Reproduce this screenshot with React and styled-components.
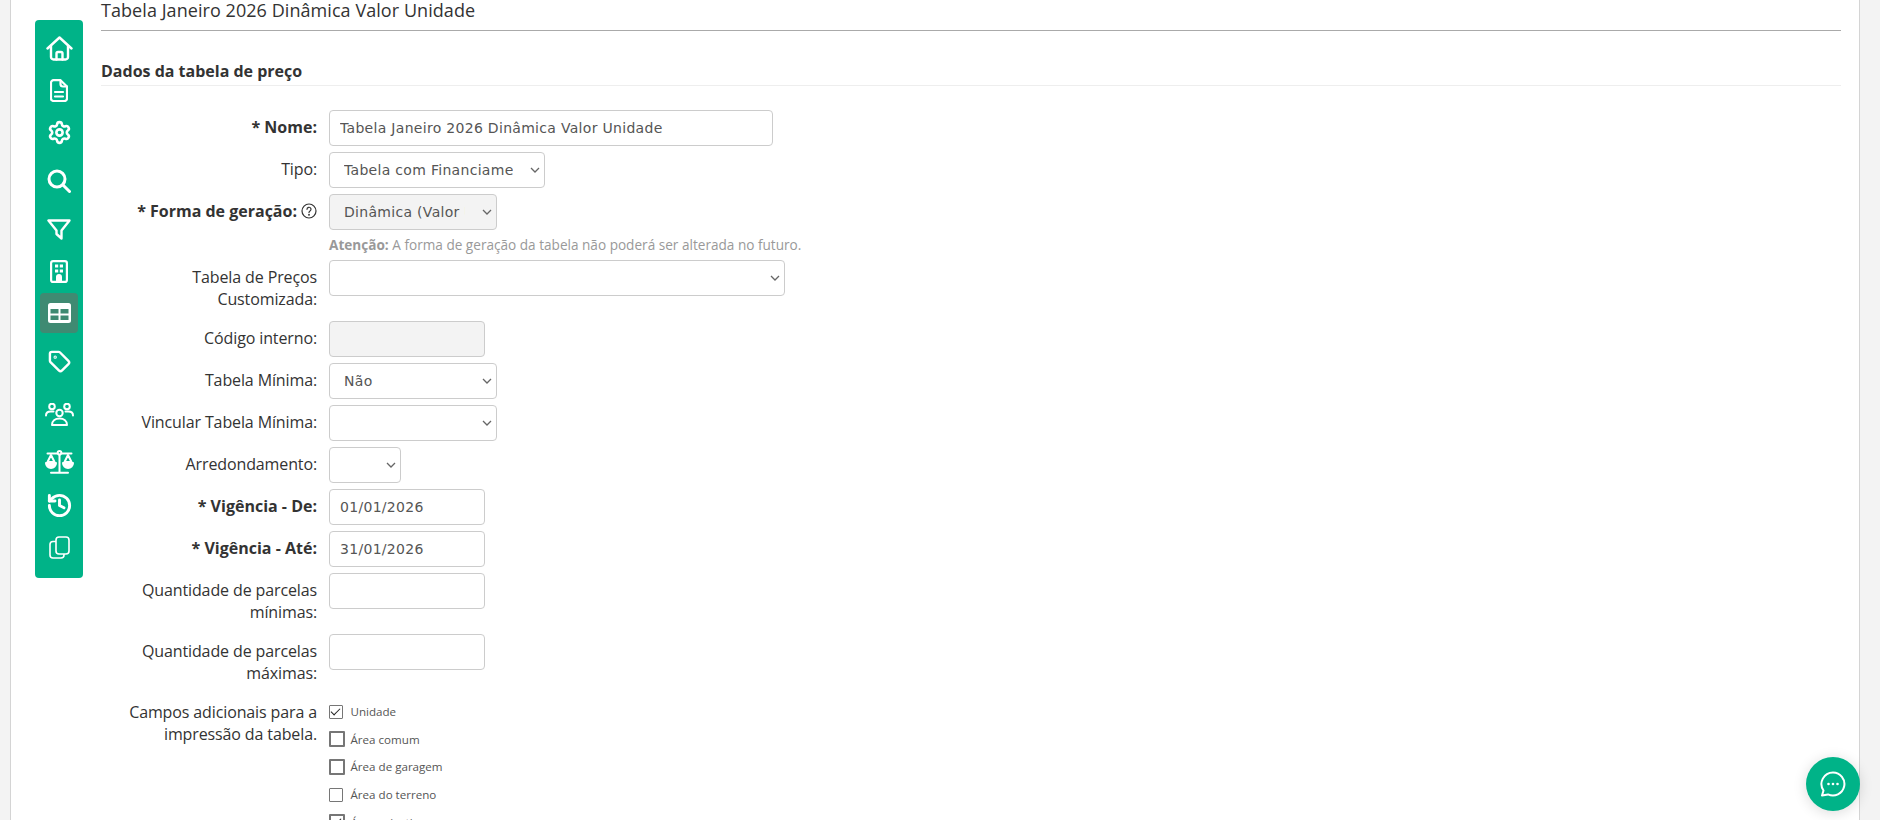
import styled, { createGlobalStyle } from "styled-components";
import { Settings, Tag, History } from "lucide-react";

const GlobalStyle = createGlobalStyle`
  html, body {
    margin: 0;
    height: 100%;
    overflow: hidden;
    background: #f3f3f3;
  }
  body {
    font-family: "Open Sans", "Liberation Sans", sans-serif;
    color: #333;
  }
`;

const Page = styled.div`
  height: 820px;
  overflow: hidden;
  padding: 0 20px 0 10px;
`;

const Card = styled.div`
  display: flex;
  align-items: flex-start;
  height: 100%;
  background: #fff;
  border-left: 1px solid #d4d4d4;
  border-right: 1px solid #d4d4d4;
`;

const Sidebar = styled.nav`
  flex: none;
  display: flex;
  flex-direction: column;
  align-items: center;
  width: 48px;
  margin: 20px 0 0 24px;
  padding: 7px 0 9px;
  background: #00b388;
  border-radius: 4px;
`;

const NavItem = styled.a`
  display: flex;
  align-items: center;
  justify-content: center;
  width: 38px;
  height: ${(p) => p.$h}px;
  border-radius: 4px;
  color: #fff;
  background: ${(p) => (p.$active ? "#3f8a72" : "transparent")};
`;

const Content = styled.main`
  flex: 1;
  min-width: 0;
  margin-left: 18px;
  padding-right: 18px;
`;

const Title = styled.h1`
  margin: 0;
  padding-bottom: 10px;
  font-size: 18px;
  font-weight: 400;
  line-height: 20px;
  letter-spacing: 0.06px;
  color: #333;
  border-bottom: 1px solid #aaa;
`;

const SectionTitle = styled.h2`
  margin: 29px 0 24px;
  padding-bottom: 3px;
  font-size: 16px;
  font-weight: 700;
  line-height: 22px;
  color: #333;
  border-bottom: 1px solid #eee;
`;

const Row = styled.div`
  display: flex;
  align-items: flex-start;
  margin-bottom: 6px;
  min-height: 36px;
`;

const Label = styled.label`
  flex: none;
  width: 216px;
  padding-top: 6px;
  padding-bottom: ${(p) => (p.$wrap ? "5px" : "0")};
  font-size: 16px;
  font-weight: ${(p) => (p.$required ? 700 : 400)};
  line-height: 22px;
  letter-spacing: ${(p) => (p.$required ? "0" : "-0.12px")};
  text-align: right;
  color: #333;
`;

const HelpIcon = styled.svg`
  margin-left: 4px;
  vertical-align: -2px;
`;

const Field = styled.div`
  margin-left: 12px;
`;

const fieldCss = `
  display: block;
  box-sizing: border-box;
  height: 36px;
  border: 1px solid #ccc;
  border-radius: 4px;
  font-family: "DejaVu Sans", Verdana, sans-serif;
  font-size: 14px;
  letter-spacing: 0.3px;
  color: #555;
  outline: none;
`;

const Input = styled.input`
  ${fieldCss}
  width: ${(p) => p.$w}px;
  padding: 0 10px;
  background: ${(p) => (p.disabled ? "#f3f3f3" : "#fff")};
`;

const chevron =
  "url(\"data:image/svg+xml,%3Csvg xmlns='http://www.w3.org/2000/svg' width='10' height='6' viewBox='0 0 10 6'%3E%3Cpath d='M1 1l4 4 4-4' fill='none' stroke='%23666' stroke-width='1.3'/%3E%3C/svg%3E\")";

const Select = styled.select`
  ${fieldCss}
  appearance: none;
  width: ${(p) => p.$w}px;
  padding: 0 31px 0 14px;
  background-color: ${(p) => (p.disabled ? "#f3f3f3" : "#fff")};
  background-image: ${chevron};
  background-repeat: no-repeat;
  background-position: right 4px center;
  opacity: 1;
`;

const Note = styled.p`
  margin: 6px 0 0;
  font-size: 13.6px;
  line-height: 18px;
  color: #999;
  white-space: nowrap;

  b {
    font-weight: 700;
  }
`;

const CheckList = styled.div`
  display: flex;
  flex-direction: column;
  padding-top: 3px;
`;

const CheckRow = styled.label`
  display: flex;
  align-items: center;
  height: 27.6px;
  font-size: 11.6px;
  color: #555;
`;

const CheckSlot = styled.span`
  display: flex;
  align-items: center;
  flex: none;
  width: 21.5px;
`;

const Box = styled.input.attrs({ type: "checkbox", readOnly: true })`
  appearance: none;
  box-sizing: border-box;
  display: block;
  margin: 0;
  width: ${(p) => (p.$thick ? 16 : 14)}px;
  height: ${(p) => (p.$thick ? 16 : 14)}px;
  background: #fff;
  border: ${(p) => (p.$thick ? "2px solid #767676" : "1px solid #767676")};
  border-radius: 1px;
  position: relative;

  &:checked::after {
    content: "";
    position: absolute;
    left: 3px;
    top: 0;
    width: 4px;
    height: 8px;
    border: solid #222;
    border-width: 0 1.5px 1.5px 0;
    transform: rotate(45deg);
  }
`;

const ChatButton = styled.button`
  position: fixed;
  left: 1806px;
  top: 757px;
  display: flex;
  align-items: center;
  justify-content: center;
  width: 54px;
  height: 54px;
  padding: 0;
  border: none;
  border-radius: 50%;
  color: #fff;
  background: #00b388;
  box-shadow: 0 2px 14px rgba(0, 0, 0, 0.14);
`;

const HomeIcon = () => (
  <svg width="27" height="25" viewBox="0 0 27 25" fill="none" stroke="currentColor" strokeWidth="2.4" strokeLinejoin="round" strokeLinecap="round">
    <path d="M1.500 12.500 13.500 1.500l12 11" />
    <path d="M5 10v11a2.500 2.500 0 0 0 2.500 2.500h12A2.500 2.500 0 0 0 22 21V10" />
    <path d="M10.500 23.500v-6a1.500 1.500 0 0 1 1.500-1.500h3a1.500 1.500 0 0 1 1.500 1.500v6" />
  </svg>
);

const DocIcon = () => (
  <svg width="18" height="23" viewBox="0 0 18 23" fill="none" stroke="currentColor" strokeWidth="2.2" strokeLinejoin="round" strokeLinecap="round">
    <path d="M3.500 1.200h7L17 7.500v12a2.500 2.500 0 0 1-2.500 2.500h-11A2.500 2.500 0 0 1 1 19.500v-15.800a2.500 2.500 0 0 1 2.500-2.500Z" />
    <path d="M10.500 1.500V5a2.500 2.500 0 0 0 2.500 2.500h4" />
    <path d="M5 13h8M5 17.500h8" />
  </svg>
);

const SearchIcon = () => (
  <svg width="24" height="24" viewBox="0 0 24 24" fill="none" stroke="currentColor" strokeWidth="3" strokeLinecap="round">
    <circle cx="10" cy="10" r="8" />
    <path d="m16 16 6.500 6.500" />
  </svg>
);

const FilterIcon = () => (
  <svg width="24" height="21" viewBox="0 0 24 21" fill="none" stroke="currentColor" strokeWidth="2.4" strokeLinejoin="round" strokeLinecap="round">
    <path d="M1.500 1.500h21L14.500 11.500v8l-5-4.500v-3.500Z" />
  </svg>
);

const BuildingIcon = () => (
  <svg width="18" height="23" viewBox="0 0 18 23" fill="none">
    <rect x="1.100" y="1.100" width="15.800" height="20.800" rx="2" stroke="currentColor" strokeWidth="2.2" />
    <path fill="currentColor" d="M5 4.500h3.200v3H5zM9.800 4.500H13v3H9.800zM5 9.500h3.200v3H5zM9.800 9.500H13v3H9.800zM6 17a3 3 0 0 1 6 0v5H6z" />
  </svg>
);

const TableIcon = () => (
  <svg width="23" height="20" viewBox="0 0 23 20" fill="none">
    <rect width="23" height="20" rx="2.500" fill="currentColor" />
    <path fill="#3f8a72" d="M2.500 6h8v4.500h-8zM12.500 6h8v4.500h-8zM2.500 12.500h8V17h-8zM12.500 12.500h8V17h-8z" />
  </svg>
);

const UsersIcon = () => (
  <svg width="29" height="23" viewBox="0 0 29 23" fill="none" stroke="currentColor" strokeWidth="2" strokeLinecap="round">
    <circle cx="7" cy="3.500" r="2.800" />
    <circle cx="22" cy="3.500" r="2.800" />
    <circle cx="14.500" cy="10" r="3.200" />
    <path d="M1 12.500c0-2.500 2-4 4.500-4h3M28 12.500c0-2.500-2-4-4.500-4h-3" />
    <path d="M7 22c0-4 3-6.500 7.500-6.500S22 18 22 22Z" strokeLinejoin="round" />
  </svg>
);

const ScaleIcon = () => (
  <svg width="29" height="24" viewBox="0 0 29 24" fill="none" stroke="currentColor" strokeWidth="2" strokeLinecap="round" strokeLinejoin="round">
    <circle cx="14.500" cy="2.800" r="1.800" />
    <path d="M2.500 3.500H12M17 3.500h9.500M14.500 5v17M6 22.800h17" />
    <path d="M6 5 2.500 12h7Z" />
    <path d="M23 5 19.500 12h7Z" />
    <path fill="currentColor" d="M1 13h10a5 5 0 0 1-10 0ZM18 13h10a5 5 0 0 1-10 0Z" />
  </svg>
);

const CopyIcon = () => (
  <svg width="21" height="23" viewBox="0 0 21 23" fill="none" stroke="currentColor" strokeWidth="1.600" strokeLinejoin="round">
    <rect x="7" y="1" width="13" height="17" rx="3" />
    <path d="M7 5.500H4a3 3 0 0 0-3 3V19a3 3 0 0 0 3 3h8a3 3 0 0 0 3-3v-1" />
  </svg>
);

const ChatIcon = () => (
  <svg width="26" height="26" viewBox="0 0 26 26" fill="none">
    <path d="M13 1.500a11.500 11.500 0 1 1-5 21.900L2 24.500l1.500-5A11.500 11.500 0 0 1 13 1.500Z" stroke="currentColor" strokeWidth="2" strokeLinejoin="round" />
    <circle cx="8.500" cy="13" r="1.300" fill="currentColor" />
    <circle cx="13" cy="13" r="1.300" fill="currentColor" />
    <circle cx="17.500" cy="13" r="1.300" fill="currentColor" />
  </svg>
);

const navItems = [
  { h: 42, icon: <HomeIcon /> },
  { h: 42, icon: <DocIcon /> },
  { h: 42, icon: <Settings size={25} strokeWidth={2.5} /> },
  { h: 56, icon: <SearchIcon /> },
  { h: 40, icon: <FilterIcon /> },
  { h: 44, icon: <BuildingIcon /> },
  { h: 40, icon: <TableIcon />, active: true },
  { h: 56, icon: <Tag size={23} strokeWidth={2.5} /> },
  { h: 50, icon: <UsersIcon /> },
  { h: 46, icon: <ScaleIcon /> },
  { h: 40, icon: <History size={27} strokeWidth={2.6} /> },
  { h: 44, icon: <CopyIcon /> },
];

const checks = [
  { label: "Unidade", checked: true },
  { label: "Área comum", thick: true },
  { label: "Área de garagem", thick: true },
  { label: "Área do terreno" },
  { label: "Área privativa", thick: true, checked: true },
];

const App = () => {
  return (
    <Page>
      <GlobalStyle />
      <Card>
        <Sidebar>
          {navItems.map((item, i) => (
            <NavItem key={i} $h={item.h} $active={item.active}>
              {item.icon}
            </NavItem>
          ))}
        </Sidebar>

        <Content>
          <Title>Tabela Janeiro 2026 Dinâmica Valor Unidade</Title>
          <SectionTitle>Dados da tabela de preço</SectionTitle>

          <Row>
            <Label $required>* Nome:</Label>
            <Field>
              <Input $w={444} defaultValue="Tabela Janeiro 2026 Dinâmica Valor Unidade" />
            </Field>
          </Row>
          <Row>
            <Label>Tipo:</Label>
            <Field>
              <Select $w={216} defaultValue="f">
                <option value="f">Tabela com Financiamento</option>
              </Select>
            </Field>
          </Row>
          <Row>
            <Label $required>
              * Forma de geração:
              <HelpIcon width="16" height="16" viewBox="0 0 16 16" fill="none" stroke="#333" strokeWidth="1.200" strokeLinecap="round">
                <circle cx="8" cy="8" r="7" />
                <path d="M6 6.300a2 2 0 1 1 3 1.700c-.7.400-1 .8-1 1.500" />
                <circle cx="8" cy="11.700" r=".4" />
              </HelpIcon>
            </Label>
            <Field>
              <Select $w={168} disabled defaultValue="d">
                <option value="d">Dinâmica (Valor Unidade)</option>
              </Select>
              <Note>
                <b>Atenção:</b> A forma de geração da tabela não poderá ser alterada no futuro.
              </Note>
            </Field>
          </Row>
          <Row>
            <Label $wrap>Tabela de Preços Customizada:</Label>
            <Field>
              <Select $w={456} />
            </Field>
          </Row>
          <Row>
            <Label>Código interno:</Label>
            <Field>
              <Input $w={156} disabled />
            </Field>
          </Row>
          <Row>
            <Label>Tabela Mínima:</Label>
            <Field>
              <Select $w={168} defaultValue="n">
                <option value="n">Não</option>
              </Select>
            </Field>
          </Row>
          <Row>
            <Label>Vincular Tabela Mínima:</Label>
            <Field>
              <Select $w={168} />
            </Field>
          </Row>
          <Row>
            <Label>Arredondamento:</Label>
            <Field>
              <Select $w={72} />
            </Field>
          </Row>
          <Row>
            <Label $required>* Vigência - De:</Label>
            <Field>
              <Input $w={156} defaultValue="01/01/2026" />
            </Field>
          </Row>
          <Row>
            <Label $required>* Vigência - Até:</Label>
            <Field>
              <Input $w={156} defaultValue="31/01/2026" />
            </Field>
          </Row>
          <Row>
            <Label $wrap>Quantidade de parcelas mínimas:</Label>
            <Field>
              <Input $w={156} />
            </Field>
          </Row>
          <Row>
            <Label $wrap>Quantidade de parcelas máximas:</Label>
            <Field>
              <Input $w={156} />
            </Field>
          </Row>
          <Row>
            <Label $wrap>Campos adicionais para a impressão da tabela.</Label>
            <Field>
              <CheckList>
                {checks.map((c) => (
                  <CheckRow key={c.label}>
                    <CheckSlot>
                      <Box $thick={c.thick} defaultChecked={c.checked} />
                    </CheckSlot>
                    {c.label}
                  </CheckRow>
                ))}
              </CheckList>
            </Field>
          </Row>
        </Content>
      </Card>
      <ChatButton aria-label="Chat">
        <ChatIcon />
      </ChatButton>
    </Page>
  );
};

export default App;
